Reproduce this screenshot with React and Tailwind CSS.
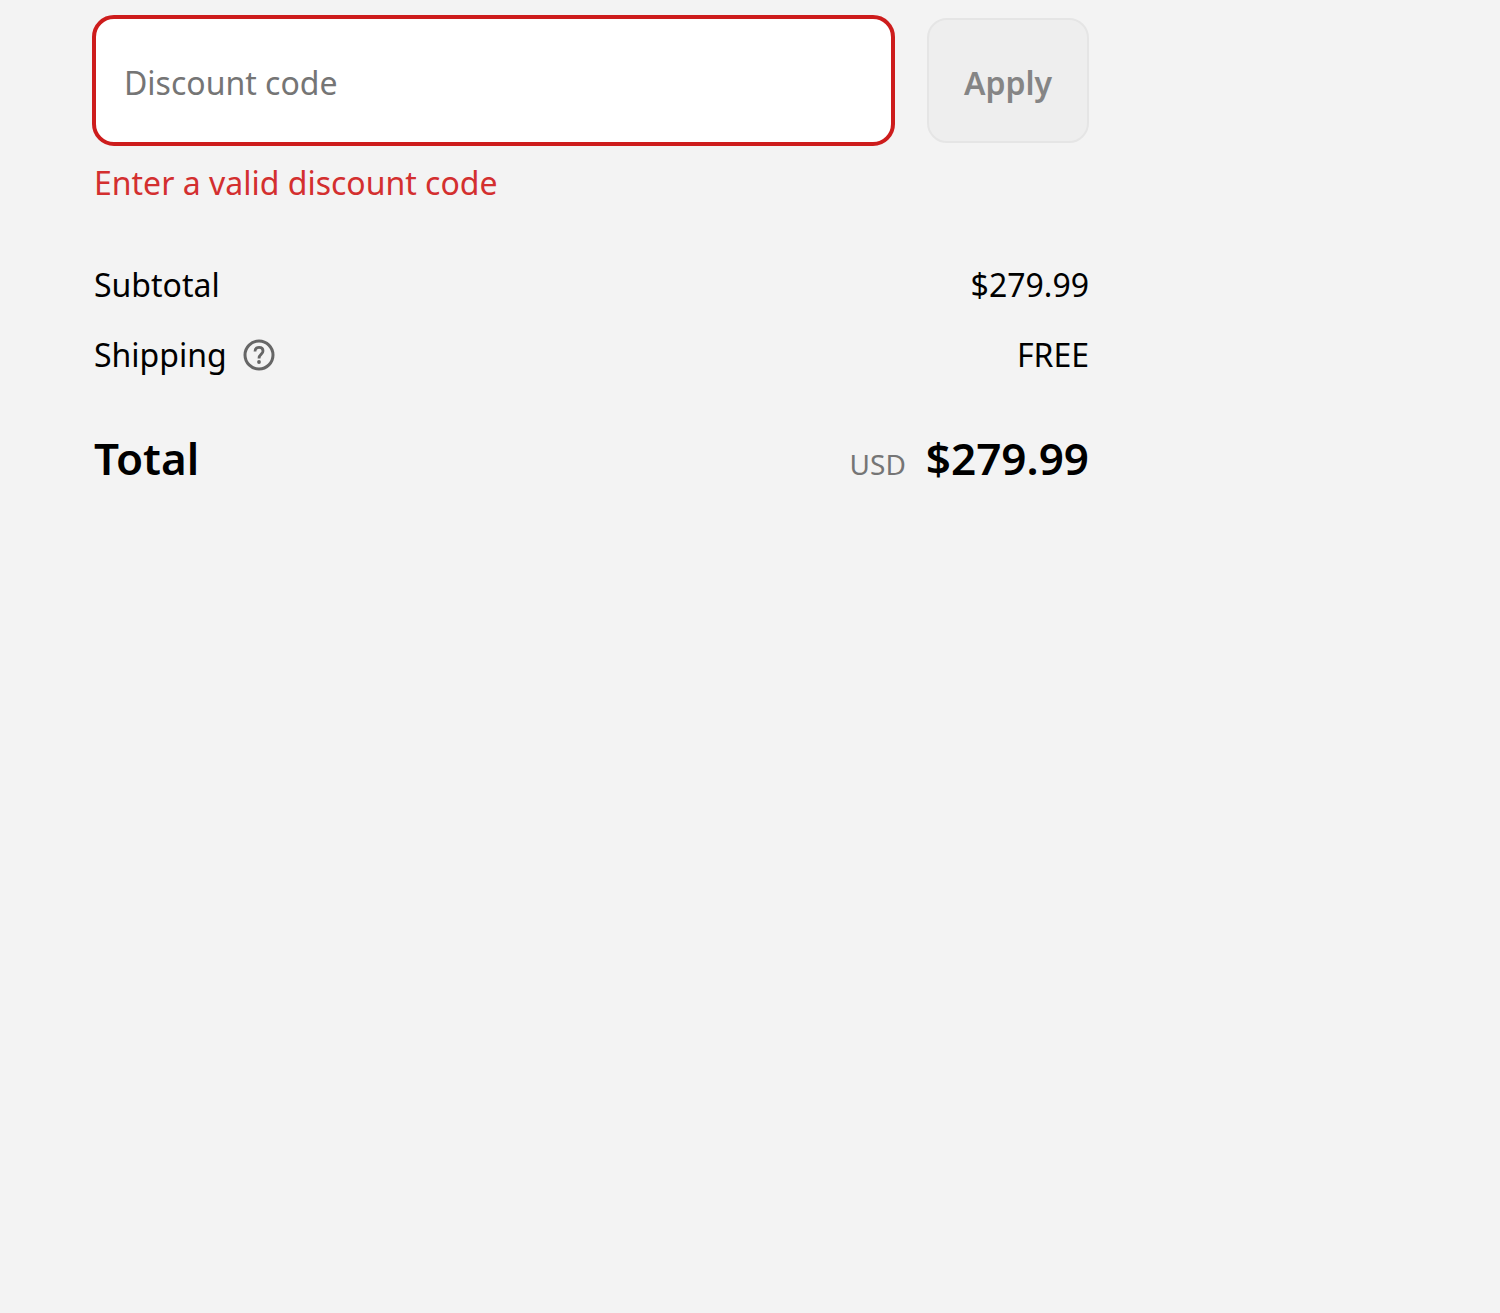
import React, { useState } from 'react';

const HelpIcon = () => (
  <svg className="size-8" viewBox="0 0 32 32" fill="none" stroke="#666666" strokeWidth="3" aria-hidden="true">
    <circle cx="16" cy="16" r="14" />
    <path d="M12 12.500C12 9.800 13.700 8.400 16.100 8.400S20 10 20 12.100C20 15.300 16 15.100 16 19.500" strokeWidth="2.800" />
    <circle cx="16" cy="23" r="1.900" fill="#666666" stroke="none" />
  </svg>
);

const App = () => {
  const [code, setCode] = useState('');

  return (
    <div className="min-h-screen bg-[#f3f3f3] px-[92px] pt-[15px] font-['Noto_Sans',sans-serif] text-[32px] leading-[46px] text-black">
      <main className="max-w-[997px]">
        <form className="flex items-center gap-8" onSubmit={(e) => e.preventDefault()}>
          <input
            id="discount"
            aria-label="Discount code"
            aria-invalid="true"
            aria-describedby="discount-error"
            placeholder="Discount code"
            value={code}
            onChange={(e) => setCode(e.target.value)}
            className="h-[131px] min-w-0 flex-1 rounded-[22px] border-4 border-[#cd1c1c] bg-white px-7 pt-1 placeholder:text-[#757575] outline-none"
          />
          <button
            type="submit"
            disabled
            className="h-[125px] w-[162px] rounded-[20px] border-2 border-[#e5e5e5] bg-[#eeeeee] pt-1 font-semibold text-[#858585]"
          >
            Apply
          </button>
        </form>

        <div className="pl-0.5">
          <p id="discount-error" className="mt-[14px] text-[#d32f2f]">Enter a valid discount code</p>

          <dl className="mt-14">
            <div className="flex justify-between">
              <dt>Subtotal</dt>
              <dd>$279.99</dd>
            </div>
            <div className="mt-6 flex justify-between">
              <dt className="flex items-center gap-4">
                Shipping
                <button type="button" aria-label="Shipping policy">
                  <HelpIcon />
                </button>
              </dt>
              <dd>FREE</dd>
            </div>
            <div className="mt-[50px] flex items-baseline justify-between text-[44px] leading-[60px] font-semibold">
              <dt>Total</dt>
              <dd className="flex items-baseline gap-5">
                <abbr title="US dollar" className="text-[28px] font-normal text-[#757575] no-underline">USD</abbr>
                $279.99
              </dd>
            </div>
          </dl>
        </div>
      </main>
    </div>
  );
};

export default App;
